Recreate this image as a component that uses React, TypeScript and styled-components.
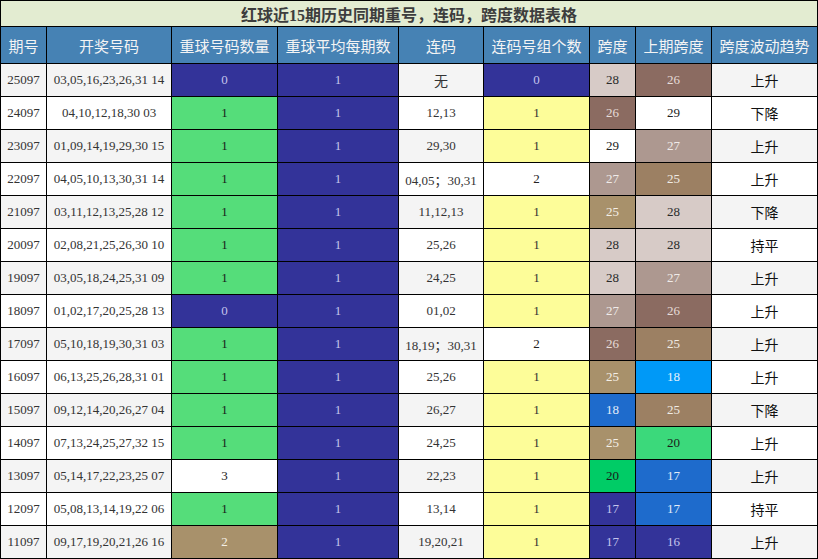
import React from "react";
import styled, { createGlobalStyle } from "styled-components";

const Global = createGlobalStyle`
  html, body { margin: 0; padding: 0; background: #ffffff; }
  #root { width: 818px; }
`;

const Grid = styled.div`
  display: grid;
  grid-template-columns: 45px 124px 105px 120px 84px 105px 45px 75px 105px;
  grid-template-rows: 25px 36px repeat(15, 32px);
  gap: 1px;
  padding: 1px;
  background: #000;
  width: 818px;
  box-sizing: border-box;
`;

const Title = styled.div`
  grid-column: 1 / -1;
  background: #e3ecd1;
  color: #3d3d3d;
  font-family: "Liberation Serif", "Noto Sans CJK SC", serif;
  font-weight: bold;
  font-size: 16px;
  display: flex;
  align-items: center;
  justify-content: center;
`;

const Head = styled.div`
  background: #4682b4;
  color: #f4f4f4;
  font-family: "Noto Sans CJK SC", sans-serif;
  font-size: 15px;
  display: flex;
  align-items: center;
  justify-content: center;
  white-space: nowrap;
`;

const Cell = styled.div<{ $bg: string; $fg: string; $cjk?: boolean }>`
  background: ${(p) => p.$bg};
  color: ${(p) => p.$fg};
  font-family: ${(p) =>
    p.$cjk ? `"Noto Sans CJK SC", sans-serif` : `"Liberation Serif", "Noto Sans CJK SC", serif`};
  font-size: ${(p) => (p.$cjk ? "14px" : "13px")};
  display: flex;
  align-items: center;
  justify-content: center;
  white-space: pre;
`;

type Tone = [string, string];
const T: Record<string, Tone> = {
  navy: ["#333399", "#c4c4ec"],
  green: ["#55dd7a", "#1a1a1a"],
  yellow: ["#fdfd99", "#333333"],
  white: ["#ffffff", "#222222"],
  lp: ["#d7cbc7", "#2a2a2a"],
  brown: ["#8b6b61", "#e6dcd8"],
  mauve: ["#ad9890", "#f0ebe9"],
  tan: ["#a8916b", "#f4efe6"],
  btan: ["#9c8063", "#f0ebe4"],
  bblue: ["#0099f7", "#e6f2fc"],
  mblue: ["#1e6bcc", "#e3ecf8"],
  green2: ["#3bd97b", "#1a1a1a"],
  green3: ["#00cc66", "#1a1a1a"],
};

type Row = {
  id: string;
  nums: string;
  rep: [string, string];
  lian: string;
  cnt: [string, string];
  span: [string, string];
  prev: [string, string];
  trend: string;
};

const rows: Row[] = [
  { id: "25097", nums: "03,05,16,23,26,31 14", rep: ["0", "navy"], lian: "无", cnt: ["0", "navy"], span: ["28", "lp"], prev: ["26", "brown"], trend: "上升" },
  { id: "24097", nums: "04,10,12,18,30 03", rep: ["1", "green"], lian: "12,13", cnt: ["1", "yellow"], span: ["26", "brown"], prev: ["29", "white"], trend: "下降" },
  { id: "23097", nums: "01,09,14,19,29,30 15", rep: ["1", "green"], lian: "29,30", cnt: ["1", "yellow"], span: ["29", "white"], prev: ["27", "mauve"], trend: "上升" },
  { id: "22097", nums: "04,05,10,13,30,31 14", rep: ["1", "green"], lian: "04,05；30,31", cnt: ["2", "white"], span: ["27", "mauve"], prev: ["25", "btan"], trend: "上升" },
  { id: "21097", nums: "03,11,12,13,25,28 12", rep: ["1", "green"], lian: "11,12,13", cnt: ["1", "yellow"], span: ["25", "tan"], prev: ["28", "lp"], trend: "下降" },
  { id: "20097", nums: "02,08,21,25,26,30 10", rep: ["1", "green"], lian: "25,26", cnt: ["1", "yellow"], span: ["28", "lp"], prev: ["28", "lp"], trend: "持平" },
  { id: "19097", nums: "03,05,18,24,25,31 09", rep: ["1", "green"], lian: "24,25", cnt: ["1", "yellow"], span: ["28", "lp"], prev: ["27", "mauve"], trend: "上升" },
  { id: "18097", nums: "01,02,17,20,25,28 13", rep: ["0", "navy"], lian: "01,02", cnt: ["1", "yellow"], span: ["27", "mauve"], prev: ["26", "brown"], trend: "上升" },
  { id: "17097", nums: "05,10,18,19,30,31 03", rep: ["1", "green"], lian: "18,19；30,31", cnt: ["2", "white"], span: ["26", "brown"], prev: ["25", "btan"], trend: "上升" },
  { id: "16097", nums: "06,13,25,26,28,31 01", rep: ["1", "green"], lian: "25,26", cnt: ["1", "yellow"], span: ["25", "tan"], prev: ["18", "bblue"], trend: "上升" },
  { id: "15097", nums: "09,12,14,20,26,27 04", rep: ["1", "green"], lian: "26,27", cnt: ["1", "yellow"], span: ["18", "mblue"], prev: ["25", "btan"], trend: "下降" },
  { id: "14097", nums: "07,13,24,25,27,32 15", rep: ["1", "green"], lian: "24,25", cnt: ["1", "yellow"], span: ["25", "tan"], prev: ["20", "green2"], trend: "上升" },
  { id: "13097", nums: "05,14,17,22,23,25 07", rep: ["3", "white"], lian: "22,23", cnt: ["1", "yellow"], span: ["20", "green3"], prev: ["17", "mblue"], trend: "上升" },
  { id: "12097", nums: "05,08,13,14,19,22 06", rep: ["1", "green"], lian: "13,14", cnt: ["1", "yellow"], span: ["17", "navy"], prev: ["17", "mblue"], trend: "持平" },
  { id: "11097", nums: "09,17,19,20,21,26 16", rep: ["2", "tan"], lian: "19,20,21", cnt: ["1", "yellow"], span: ["17", "navy"], prev: ["16", "navy"], trend: "上升" },
];

const headers = ["期号", "开奖号码", "重球号码数量", "重球平均每期数", "连码", "连码号组个数", "跨度", "上期跨度", "跨度波动趋势"];

export default function App() {
  return (
    <>
      <Global />
      <Grid>
        <Title>红球近15期历史同期重号，连码，跨度数据表格</Title>
        {headers.map((h) => (
          <Head key={h}>{h}</Head>
        ))}
        {rows.map((r, i) => {
          const base = i % 2 === 0 ? "#f4f4f4" : "#ffffff";
          const txt = "#333333";
          const tone = (k: string) => T[k];
          return (
            <React.Fragment key={r.id}>
              <Cell $bg={base} $fg={txt}>{r.id}</Cell>
              <Cell $bg={base} $fg={txt}>{r.nums}</Cell>
              <Cell $bg={tone(r.rep[1])[0]} $fg={tone(r.rep[1])[1]}>{r.rep[0]}</Cell>
              <Cell $bg={T.navy[0]} $fg={T.navy[1]}>1</Cell>
              <Cell $bg={base} $fg={txt} $cjk={r.lian === "无"}>{r.lian}</Cell>
              <Cell $bg={tone(r.cnt[1])[0]} $fg={tone(r.cnt[1])[1]}>{r.cnt[0]}</Cell>
              <Cell $bg={tone(r.span[1])[0]} $fg={tone(r.span[1])[1]}>{r.span[0]}</Cell>
              <Cell $bg={tone(r.prev[1])[0]} $fg={tone(r.prev[1])[1]}>{r.prev[0]}</Cell>
              <Cell $bg={base} $fg="#111111" $cjk>{r.trend}</Cell>
            </React.Fragment>
          );
        })}
      </Grid>
    </>
  );
}
